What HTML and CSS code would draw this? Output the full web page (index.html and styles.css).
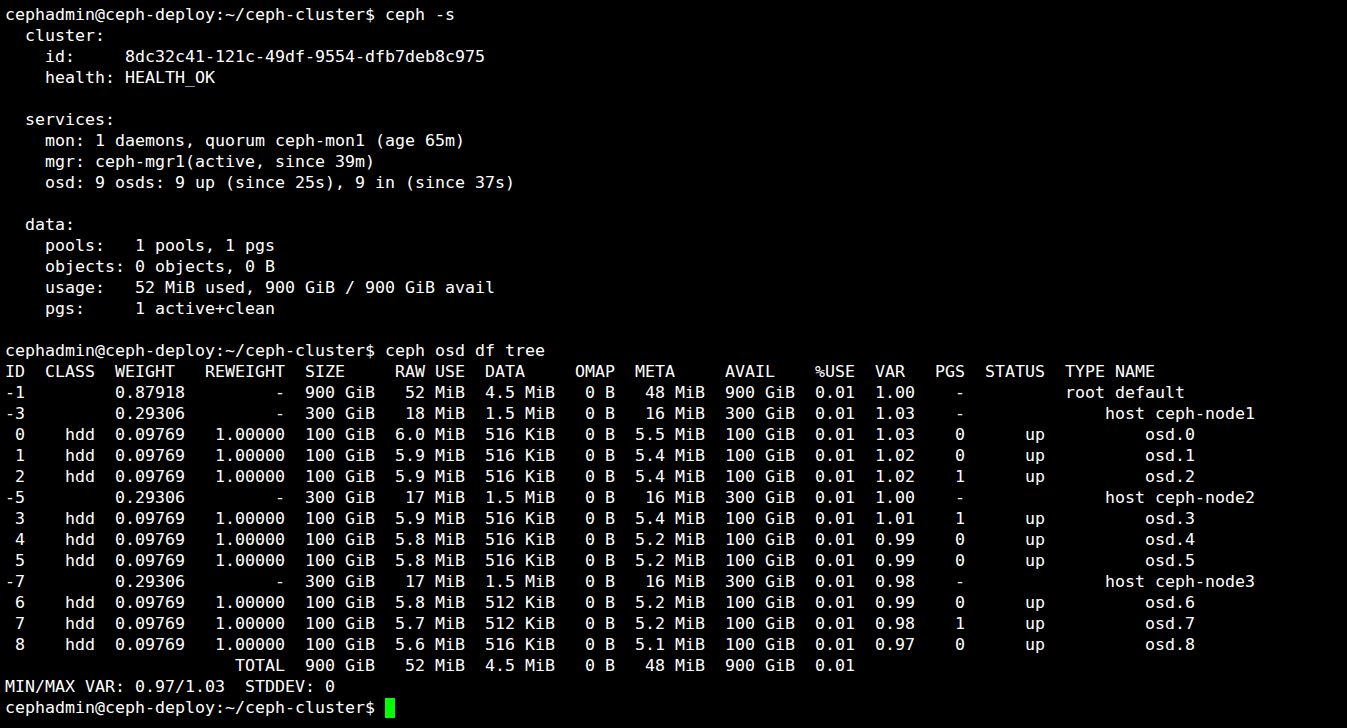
FILE: index.html
```html
<!DOCTYPE html>
<html lang="en">
<head>
  <meta charset="UTF-8">
  <title>ceph-deploy</title>
  <link rel="stylesheet" href="styles.css">
</head>
<body>
<pre class="term">cephadmin@ceph-deploy:~/ceph-cluster$ ceph -s
  cluster:
    id:     8dc32c41-121c-49df-9554-dfb7deb8c975
    health: HEALTH_OK

  services:
    mon: 1 daemons, quorum ceph-mon1 (age 65m)
    mgr: ceph-mgr1(active, since 39m)
    osd: 9 osds: 9 up (since 25s), 9 in (since 37s)

  data:
    pools:   1 pools, 1 pgs
    objects: 0 objects, 0 B
    usage:   52 MiB used, 900 GiB / 900 GiB avail
    pgs:     1 active+clean

cephadmin@ceph-deploy:~/ceph-cluster$ ceph osd df tree
ID  CLASS  WEIGHT   REWEIGHT  SIZE     RAW USE  DATA     OMAP  META     AVAIL    %USE  VAR   PGS  STATUS  TYPE NAME
-1         0.87918         -  900 GiB   52 MiB  4.5 MiB   0 B   48 MiB  900 GiB  0.01  1.00    -          root default
-3         0.29306         -  300 GiB   18 MiB  1.5 MiB   0 B   16 MiB  300 GiB  0.01  1.03    -              host ceph-node1
 0    hdd  0.09769   1.00000  100 GiB  6.0 MiB  516 KiB   0 B  5.5 MiB  100 GiB  0.01  1.03    0      up          osd.0
 1    hdd  0.09769   1.00000  100 GiB  5.9 MiB  516 KiB   0 B  5.4 MiB  100 GiB  0.01  1.02    0      up          osd.1
 2    hdd  0.09769   1.00000  100 GiB  5.9 MiB  516 KiB   0 B  5.4 MiB  100 GiB  0.01  1.02    1      up          osd.2
-5         0.29306         -  300 GiB   17 MiB  1.5 MiB   0 B   16 MiB  300 GiB  0.01  1.00    -              host ceph-node2
 3    hdd  0.09769   1.00000  100 GiB  5.9 MiB  516 KiB   0 B  5.4 MiB  100 GiB  0.01  1.01    1      up          osd.3
 4    hdd  0.09769   1.00000  100 GiB  5.8 MiB  516 KiB   0 B  5.2 MiB  100 GiB  0.01  0.99    0      up          osd.4
 5    hdd  0.09769   1.00000  100 GiB  5.8 MiB  516 KiB   0 B  5.2 MiB  100 GiB  0.01  0.99    0      up          osd.5
-7         0.29306         -  300 GiB   17 MiB  1.5 MiB   0 B   16 MiB  300 GiB  0.01  0.98    -              host ceph-node3
 6    hdd  0.09769   1.00000  100 GiB  5.8 MiB  512 KiB   0 B  5.2 MiB  100 GiB  0.01  0.99    0      up          osd.6
 7    hdd  0.09769   1.00000  100 GiB  5.7 MiB  512 KiB   0 B  5.2 MiB  100 GiB  0.01  0.98    1      up          osd.7
 8    hdd  0.09769   1.00000  100 GiB  5.6 MiB  516 KiB   0 B  5.1 MiB  100 GiB  0.01  0.97    0      up          osd.8
                       TOTAL  900 GiB   52 MiB  4.5 MiB   0 B   48 MiB  900 GiB  0.01
MIN/MAX VAR: 0.97/1.03  STDDEV: 0
cephadmin@ceph-deploy:~/ceph-cluster$ <span class="cursor"></span></pre>
</body>
</html>
```

FILE: styles.css
```css
html, body {
  margin: 0;
  padding: 0;
  background: #000;
  height: 100%;
}

.term {
  margin: 0;
  padding: 4px 0 0 5px;
  font-family: "DejaVu Sans Mono", monospace;
  font-size: 16.62px;
  line-height: 21px;
  color: #fff;
  white-space: pre;
}

.cursor {
  display: inline-block;
  width: 10px;
  height: 20px;
  background: #00ff00;
  vertical-align: -5px;
}
```
